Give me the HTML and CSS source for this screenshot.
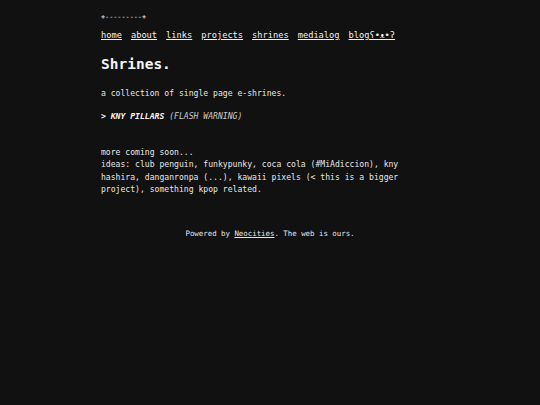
FILE: index.html
```html
<!DOCTYPE html>
<html>
<head>
<meta charset="utf-8">
<link rel="stylesheet" href="styles.css">
</head>
<body>
<div class="page">
  <div class="deco">+---------+</div>
  <nav class="nav">
    <a href="#">home</a>
    <a href="#">about</a>
    <a href="#">links</a>
    <a href="#">projects</a>
    <a href="#">shrines</a>
    <a href="#">medialog</a>
    <a href="#">blogʕ•ᴥ•ʔ</a>
  </nav>
  <h1 class="title">Shrines.</h1>
  <p class="text">a collection of single page e-shrines.</p>
  <p class="text item"><b>&gt; KNY PILLARS</b> <i>(FLASH WARNING)</i></p>
  <p class="text more">more coming soon...<br>ideas: club penguin, funkypunky, coca cola (#MiAdiccion), kny hashira, danganronpa (...), kawaii pixels (&lt; this is a bigger project), something kpop related.</p>
</div>
<footer class="footer">Powered by <a href="#">Neocities</a>. The web is ours.</footer>
</body>
</html>
```
FILE: styles.css
```css
html, body {
  margin: 0;
  padding: 0;
  background: #111111;
}
body {
  color: #e6e6e6;
  font-family: "DejaVu Sans Mono", monospace;
  font-size: 8.1px;
  line-height: 1.5;
}
a {
  color: #f0f0f0;
}
.page {
  width: 338px;
  margin: 0 auto;
  padding-top: 12px;
}
.deco {
  font-size: 6.8px;
  line-height: 10px;
  color: #f0f0f0;
}
.nav {
  display: flex;
  gap: 9px;
  margin-top: 7px;
  font-size: 8.7px;
  line-height: 12px;
}
.title {
  font-size: 14.5px;
  font-weight: bold;
  color: #f4f4f4;
  margin: 14px 0 0;
  line-height: 18px;
}
.text {
  margin: 14px 0 0;
}
.item {
  margin-top: 11px;
}
.item b {
  font-style: italic;
  color: #f4f4f4;
}
.item i {
  color: #cccccc;
}
.more {
  margin-top: 24px;
}
.footer {
  text-align: center;
  margin-top: 33px;
  font-size: 7.4px;
  color: #e6e6e6;
}
.footer a {
  color: #e6e6e6;
}
```
